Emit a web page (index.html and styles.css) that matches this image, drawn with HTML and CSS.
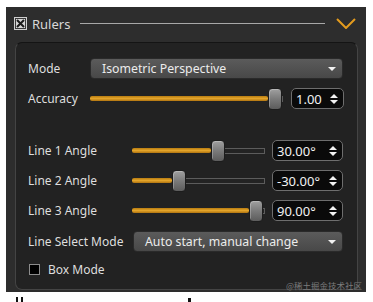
FILE: index.html
```html
<!DOCTYPE html>
<html>
<head>
<meta charset="utf-8">
<link rel="stylesheet" href="styles.css">
</head>
<body>
<div class="window">
  <div class="header">
    <svg class="hcheck" width="13" height="13" viewBox="0 0 13 13">
      <rect x="0.5" y="0.5" width="12" height="12" fill="#3a3a3a" stroke="#cfcfcf"/>
      <rect x="2" y="2" width="9" height="9" fill="#d6d6d6"/>
      <path d="M3 3 L10 10 M10 3 L3 10" stroke="#1a1a1a" stroke-width="2"/>
    </svg>
    <span class="title">Rulers</span>
    <div class="hline"></div>
    <svg class="chevron" width="20" height="11" viewBox="0 0 20 11">
      <path d="M1 1 L10 10 L19 1" fill="none" stroke="#e39b1e" stroke-width="2"/>
    </svg>
  </div>
  <div class="panel">
    <div class="row">
      <span class="label">Mode</span>
      <div class="dropdown"><span>Isometric Perspective</span><i class="tri-down"></i></div>
    </div>
    <div class="row r-acc">
      <span class="label">Accuracy</span>
      <div class="slider">
        <div class="fill" style="width:178px"></div>
        <div class="handle"></div>
        <div class="groove"></div>
      </div>
      <div class="spin narrow"><span>1.00</span><span class="arrows"><i class="tri-up"></i><i class="tri-down"></i></span></div>
    </div>
    <div class="row r-l1">
      <span class="label wide">Line 1 Angle</span>
      <div class="slider">
        <div class="fill" style="width:79px"></div>
        <div class="handle"></div>
        <div class="groove"></div>
      </div>
      <div class="spin"><span>30.00°</span><span class="arrows"><i class="tri-up"></i><i class="tri-down"></i></span></div>
    </div>
    <div class="row r-next">
      <span class="label wide">Line 2 Angle</span>
      <div class="slider">
        <div class="fill" style="width:40px"></div>
        <div class="handle"></div>
        <div class="groove"></div>
      </div>
      <div class="spin"><span>-30.00°</span><span class="arrows"><i class="tri-up"></i><i class="tri-down"></i></span></div>
    </div>
    <div class="row r-next">
      <span class="label wide">Line 3 Angle</span>
      <div class="slider">
        <div class="fill" style="width:117px"></div>
        <div class="handle"></div>
        <div class="groove"></div>
      </div>
      <div class="spin"><span>90.00°</span><span class="arrows"><i class="tri-up"></i><i class="tri-down"></i></span></div>
    </div>
    <div class="row r-lsm">
      <span class="label wide">Line Select Mode</span>
      <div class="dropdown lsm"><span>Auto start, manual change</span><i class="tri-down"></i></div>
    </div>
    <div class="row r-box">
      <span class="box"></span>
      <span class="boxlabel">Box Mode</span>
    </div>
  </div>
  <span class="watermark">@稀土掘金技术社区</span>
</div>
<div class="below">
  <span class="mark m1"></span><span class="mark m2"></span><span class="mark m3"></span>
</div>
</body>
</html>
```

FILE: styles.css
```css
html, body {
  margin: 0;
  padding: 0;
  background: #ffffff;
}
body {
  font-family: "Noto Sans", "Noto Sans CJK SC", sans-serif;
  font-size: 12px;
  color: #dedede;
}
.window {
  position: relative;
  margin: 7px 7px 0 6px;
  width: 360px;
  height: 285px;
  background: #2d2d2d;
  display: flex;
  flex-direction: column;
}
.header {
  height: 33px;
  display: flex;
  align-items: center;
  padding: 0 10px 0 8px;
  flex: none;
}
.hcheck {
  flex: none;
  display: block;
}
.title {
  margin-left: 5px;
  font-size: 13px;
  line-height: 16px;
  color: #d8d8d8;
}
.hline {
  flex: 1;
  height: 1px;
  background: #a8a8a8;
  margin: 0 11px 0 10px;
}
.chevron {
  display: block;
  flex: none;
}
.panel {
  flex: 1;
  margin: 2px 8px 2px 9px;
  border: 1px solid #444;
  border-top-color: #141414;
  border-radius: 7px;
  background: #222222;
  padding: 15px 14px 0 12px;
  display: flex;
  flex-direction: column;
}
.row {
  display: flex;
  align-items: center;
  height: 21px;
  flex: none;
}
.r-acc { margin-top: 9px; }
.r-l1 { margin-top: 31px; }
.r-next { margin-top: 9px; }
.r-lsm { margin-top: 10px; }
.r-box { margin-top: 7px; }
.label {
  width: 62px;
  flex: none;
  line-height: 16px;
  white-space: nowrap;
}
.label.wide {
  width: 104px;
}
.dropdown {
  flex: 1;
  height: 21px;
  box-sizing: border-box;
  border: 1px solid #2a2a2a;
  border-radius: 4px;
  background: linear-gradient(#5b5b5b, #484848);
  display: flex;
  align-items: center;
  justify-content: space-between;
  padding: 0 6px 0 11px;
  color: #ececec;
  font-size: 12.3px;
  line-height: 16px;
}
.dropdown.lsm {
  margin-left: 1px;
}
.tri-down, .tri-up {
  display: block;
  width: 0;
  height: 0;
  border-left: 4px solid transparent;
  border-right: 4px solid transparent;
}
.tri-down {
  border-top: 4px solid #f2f2f2;
}
.tri-up {
  border-bottom: 4px solid #f2f2f2;
}
.slider {
  flex: 1;
  display: flex;
  align-items: center;
  height: 22px;
}
.fill {
  flex: none;
  height: 5px;
  border-radius: 2px;
  background: linear-gradient(#b87c10, #e3a42a 50%, #b07410);
}
.handle {
  flex: none;
  width: 14px;
  height: 22px;
  box-sizing: border-box;
  border: 1px solid #1c1c1c;
  border-radius: 4px;
  background: linear-gradient(#a0a0a0, #7a7a7a 50%, #5c5c5c);
  box-shadow: inset 1px 1px 0 rgba(255,255,255,0.25);
}
.groove {
  flex: 1;
  height: 6px;
  box-sizing: border-box;
  border: 1px solid #5c5c5c;
  border-left: none;
  background: #232323;
}
.spin {
  flex: none;
  width: 71px;
  margin-left: 7px;
  height: 21px;
  box-sizing: border-box;
  border: 1px solid #6e6e6e;
  border-radius: 5px;
  background: #0a0a0a;
  color: #f2f2f2;
  font-size: 13px;
  line-height: 16px;
  display: flex;
  align-items: center;
  justify-content: space-between;
  padding: 0 5px 0 4px;
}
.spin.narrow {
  width: 53px;
  margin-left: 8px;
}
.arrows {
  display: flex;
  flex-direction: column;
  gap: 2px;
}
.box {
  flex: none;
  width: 11px;
  height: 11px;
  box-sizing: border-box;
  margin-left: 1px;
  border: 1px solid #8c8c8c;
  background: #000;
}
.boxlabel {
  margin-left: 8px;
  line-height: 16px;
}
.watermark {
  position: absolute;
  right: 4px;
  bottom: 1px;
  font-size: 8.5px;
  line-height: 12px;
  color: #7c7c7c;
  font-family: "Noto Sans CJK SC", sans-serif;
}
.below {
  display: flex;
  height: 10px;
  padding-top: 5px;
}
.mark {
  display: block;
  width: 2px;
  height: 5px;
  background: #111;
}
.m1 { margin-left: 16px; }
.m2 { margin-left: 3px; }
.m3 { margin-left: 165px; width: 3px; height: 4px; margin-top: 1px; }
```
